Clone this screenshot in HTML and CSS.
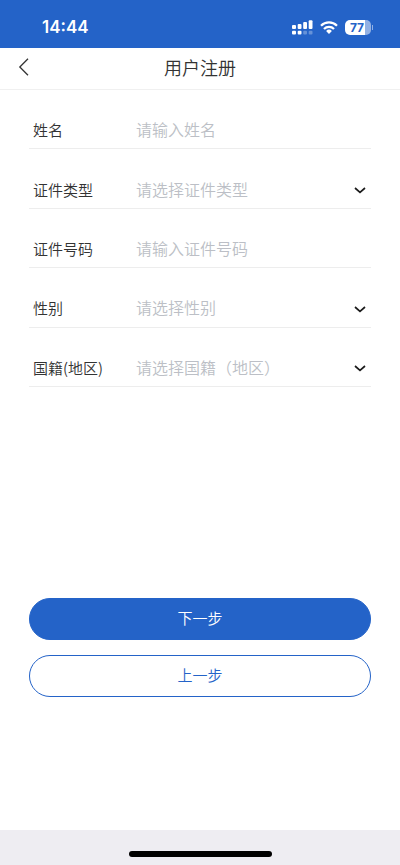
FILE: index.html
```html
<!DOCTYPE html>
<html lang="zh-CN">
<head>
<meta charset="utf-8">
<meta name="viewport" content="width=device-width, initial-scale=1">
<title>用户注册</title>
<link rel="stylesheet" href="styles.css">
</head>
<body>
<div class="status-bar">
  <span class="time">14:44</span>
  <div class="indicators">
    <svg class="signal" width="21" height="15" viewBox="0 0 21 15" fill="#fff" aria-hidden="true">
      <rect x="0" y="5" width="4" height="4" rx="1"/>
      <rect x="5.7" y="4" width="3.8" height="5" rx="1"/>
      <rect x="11.2" y="2" width="3.8" height="7" rx="1"/>
      <rect x="16.7" y="0.3" width="3.8" height="8.7" rx="1"/>
      <rect x="0" y="10.7" width="4" height="3.8" rx="1"/>
      <rect x="5.7" y="10.7" width="3.8" height="3.8" rx="1"/>
      <rect x="11.2" y="10.7" width="3.8" height="3.8" rx="1" opacity=".3"/>
      <rect x="16.7" y="10.7" width="3.8" height="3.8" rx="1" opacity=".3"/>
    </svg>
    <svg class="wifi" width="18" height="13" viewBox="0 0 18 13" fill="none" stroke="#fff" stroke-width="2.3" aria-hidden="true">
      <path d="M1 4.7a11.4 11.4 0 0 1 16 0"/>
      <path d="M4 8a7.1 7.1 0 0 1 10 0"/>
      <path d="M9 13l-2.9-3a4.1 4.1 0 0 1 5.8 0z" fill="#fff" stroke="none"/>
    </svg>
    <div class="battery"><span class="battery-level">77</span></div>
  </div>
</div>
<header class="nav-bar">
  <button class="back" type="button" aria-label="返回">
    <svg width="12" height="18" viewBox="0 0 12 18" fill="none" stroke="#333" stroke-width="1.3" aria-hidden="true"><path d="M10 .7L1.8 9l8.2 8.3"/></svg>
  </button>
  <h1 class="title">用户注册</h1>
</header>
<form class="register">
  <div class="fields">
    <div class="field">
      <label for="name">姓名</label>
      <input id="name" type="text" placeholder="请输入姓名">
    </div>
    <div class="field">
      <label for="id-type">证件类型</label>
      <select id="id-type"><option value="">请选择证件类型</option></select>
      <svg class="chevron" viewBox="0 0 12 7" aria-hidden="true"><path d="M1 1l5 4.3L11 1"/></svg>
    </div>
    <div class="field">
      <label for="id-number">证件号码</label>
      <input id="id-number" type="text" placeholder="请输入证件号码">
    </div>
    <div class="field">
      <label for="gender">性别</label>
      <select id="gender"><option value="">请选择性别</option></select>
      <svg class="chevron" viewBox="0 0 12 7" aria-hidden="true"><path d="M1 1l5 4.3L11 1"/></svg>
    </div>
    <div class="field">
      <label for="region">国籍(地区)</label>
      <select id="region"><option value="">请选择国籍（地区）</option></select>
      <svg class="chevron" viewBox="0 0 12 7" aria-hidden="true"><path d="M1 1l5 4.3L11 1"/></svg>
    </div>
  </div>
  <div class="actions">
    <button class="btn btn-primary" type="submit">下一步</button>
    <button class="btn btn-outline" type="button">上一步</button>
  </div>
</form>
<footer class="home-area"><div class="home-indicator"></div></footer>
</body>
</html>
```
FILE: styles.css
```css
* {
  box-sizing: border-box;
}

body {
  margin: 0;
  min-height: 100vh;
  display: flex;
  flex-direction: column;
  background: #fff;
  color: #333;
  font-family: "Noto Sans CJK SC", sans-serif;
  font-weight: 350;
}

button,
input,
select {
  margin: 0;
  padding: 0;
  border: 0;
  background: none;
  color: inherit;
  font-family: inherit;
  font-weight: inherit;
}

.status-bar {
  height: 48px;
  padding: 6px 29px 0 42px;
  display: flex;
  align-items: center;
  justify-content: space-between;
  background: #2463c8;
  color: #fff;
}

.time {
  font: 600 17px/22px Inter, sans-serif;
}

.indicators {
  display: flex;
  align-items: center;
  gap: 7px;
}

.battery {
  position: relative;
  width: 26px;
  height: 15px;
  padding-right: 2px;
  border-radius: 5px;
  background: linear-gradient(to right, #fff 77%, #92b1e4 77%);
  color: #2463c8;
  text-align: center;
  font: 700 12px/15px Inter, sans-serif;
}

.battery::after {
  content: "";
  position: absolute;
  left: 27px;
  top: 5px;
  width: 1px;
  height: 5px;
  background: #92b1e4;
}

.nav-bar {
  height: 42px;
  padding: 0 18px 3px;
  display: grid;
  grid-template-columns: 24px 1fr 24px;
  align-items: center;
  border-bottom: 1px solid #f0f0f0;
}

.back {
  height: 38px;
  display: flex;
  align-items: center;
}

.title {
  margin: 0;
  text-align: center;
  font-size: 18px;
  line-height: 26px;
  font-weight: inherit;
}

.register {
  flex: 1;
  padding: 0 29px;
}

.fields {
  min-height: 297px;
  display: grid;
  grid-auto-rows: 1fr;
}

.field {
  position: relative;
  padding: 22px 4px 0;
  display: grid;
  grid-template-columns: 103px 1fr;
  align-items: center;
  border-bottom: 1px solid #ededed;
}

.field label {
  font-size: 15px;
  line-height: 24px;
}

.field input,
.field select {
  width: 100%;
  height: 26px;
  padding-bottom: 2px;
  appearance: none;
  font-size: 16px;
  line-height: 24px;
  outline: none;
}

.field select,
.field input::placeholder {
  color: #bcbfc6;
  opacity: 1;
}

.chevron {
  position: absolute;
  right: 5px;
  bottom: 14px;
  width: 12px;
  height: 7px;
  fill: none;
  stroke: #1b1b1b;
  stroke-width: 1.7;
  pointer-events: none;
}

.actions {
  padding-top: 211px;
  display: grid;
  gap: 15px;
}

.btn {
  height: 42px;
  padding-bottom: 3px;
  border: 1px solid #2463c8;
  border-radius: 21px;
  font-size: 15px;
  line-height: 24px;
}

.btn-primary {
  background: #2463c8;
  color: #fff;
}

.btn-outline {
  color: #2463c8;
}

.home-area {
  height: 35px;
  padding-top: 21px;
  background: #eeedf2;
}

.home-indicator {
  width: 143px;
  height: 6px;
  margin: 0 auto;
  border-radius: 3px;
  background: #000;
}
```
